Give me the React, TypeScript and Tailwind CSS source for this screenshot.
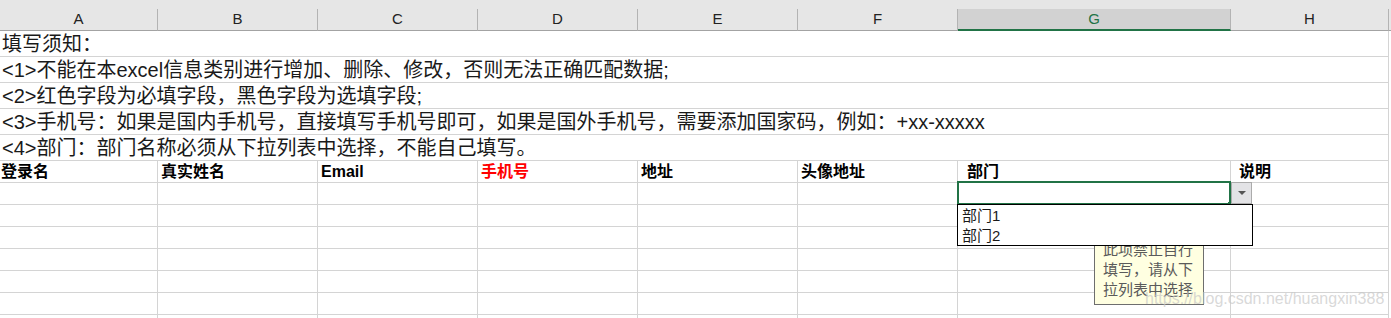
import React from "react";

// 열 정의 (엑셀 열 머리글 + 폭)
const COLS = [
  { key: "A", w: "w-[158px]" },
  { key: "B", w: "w-[160px]" },
  { key: "C", w: "w-[160px]" },
  { key: "D", w: "w-[160px]" },
  { key: "E", w: "w-[160px]" },
  { key: "F", w: "w-[160px]" },
  { key: "G", w: "w-[273px]" },
  { key: "H", w: "w-[158px]" },
];

const NOTES: string[] = [
  "填写须知：",
  "<1>不能在本excel信息类别进行增加、删除、修改，否则无法正确匹配数据;",
  "<2>红色字段为必填字段，黑色字段为选填字段;",
  "<3>手机号：如果是国内手机号，直接填写手机号即可，如果是国外手机号，需要添加国家码，例如：+xx-xxxxx",
  "<4>部门：部门名称必须从下拉列表中选择，不能自己填写。",
];

const FIELDS = [
  { label: "登录名", pad: "pl-[1px]" },
  { label: "真实姓名", pad: "pl-[3px]" },
  { label: "Email", pad: "pl-[3px]" },
  { label: "手机号", pad: "pl-[3px]", red: true },
  { label: "地址", pad: "pl-[3px]" },
  { label: "头像地址", pad: "pl-[3px]" },
  { label: "部门", pad: "pl-[9px]" },
  { label: "说明", pad: "pl-[8px]" },
];

const FONT = "font-['Liberation_Sans','Noto_Sans_CJK_SC',sans-serif]";

export default function App() {
  return (
    <div className={`relative w-[1391px] h-[318px] overflow-hidden bg-white text-black ${FONT}`}>
      {/* 상단 회색 띠 */}
      <div className="h-[9px] bg-[#e6e6e6]" />

      {/* 열 머리글 */}
      <div className="flex h-[22px] bg-[#e6e6e6]">
        {COLS.map((c) =>
          c.key === "G" ? (
            <div
              key={c.key}
              className={`${c.w} flex items-center justify-center border-r border-[#b3b3b3] border-b-2 border-b-[#217346] bg-[#d2d2d2] text-[15px] text-[#217346]`}
            >
              {c.key}
            </div>
          ) : (
            <div
              key={c.key}
              className={`${c.w} flex items-center justify-center border-r border-[#b3b3b3] border-b border-b-[#a3a3a3] text-[15px] text-[#222]`}
            >
              {c.key}
            </div>
          )
        )}
        <div className="flex-1 border-b border-[#a3a3a3]" />
      </div>

      {/* 안내 문구 (병합 셀) */}
      {NOTES.map((n, i) => (
        <div
          key={i}
          className="flex h-[26px] w-[1389px] items-center border-r border-b border-[#d4d4d4] pl-[2px] text-[20px] leading-[22px] text-[#1a1a1a] whitespace-nowrap"
        >
          {n}
        </div>
      ))}

      {/* 필드 이름 행 */}
      <div className="flex h-[22px]">
        {COLS.map((c, i) => (
          <div
            key={c.key}
            className={`${c.w} ${FIELDS[i].pad} flex items-end border-r border-b border-[#d4d4d4] text-[16px] font-bold leading-[20px] ${
              FIELDS[i].red ? "text-[#ff0000]" : "text-black"
            }`}
          >
            {FIELDS[i].label}
          </div>
        ))}
      </div>

      {/* 빈 데이터 행 */}
      {Array.from({ length: 7 }).map((_, r) => (
        <div key={r} className="flex h-[22px]">
          {COLS.map((c) => (
            <div key={c.key} className={`${c.w} border-r border-b border-[#d4d4d4]`} />
          ))}
        </div>
      ))}

      {/* 선택 셀 테두리 */}
      <div className="absolute left-[957px] top-[181px] h-[24px] w-[274px] border-2 border-[#217346]" />
      <div className="absolute left-[1228px] top-[202px] h-[4px] w-[4px] bg-[#217346]" />

      {/* 드롭다운 버튼 */}
      <div className="absolute left-[1231px] top-[182px] flex h-[22px] w-[21px] items-center justify-center border border-[#ababab] bg-[#e3e3e6]">
        <span className="block h-0 w-0 border-x-[4px] border-t-[4px] border-x-transparent border-t-[#555]" />
      </div>

      {/* 입력 안내 툴팁 */}
      <div className="absolute left-[1094px] top-[230px] h-[75px] w-[110px] border border-[#6e6e6e] bg-[#ffffe1] px-[8px] pt-[8px] text-[15px] leading-[20px] text-[#5a5a5a] font-['Noto_Sans_CJK_SC',sans-serif]">
        <div>此项禁止自行</div>
        <div>填写，请从下</div>
        <div>拉列表中选择</div>
      </div>

      {/* 드롭다운 목록 */}
      <div className="absolute left-[957px] top-[204px] h-[42px] w-[296px] border border-black bg-white px-[4px] pt-[1px] text-[15px] leading-[20px] text-[#1a1a1a]">
        <div>部门1</div>
        <div>部门2</div>
      </div>

      {/* 워터마크 (맨 위에 반투명) */}
      <div className="absolute left-[1145px] top-[289px] text-[16px] leading-[20px] text-[#c8c8c8]/70 whitespace-nowrap">
        https://blog.csdn.net/huangxin388
      </div>
    </div>
  );
}
